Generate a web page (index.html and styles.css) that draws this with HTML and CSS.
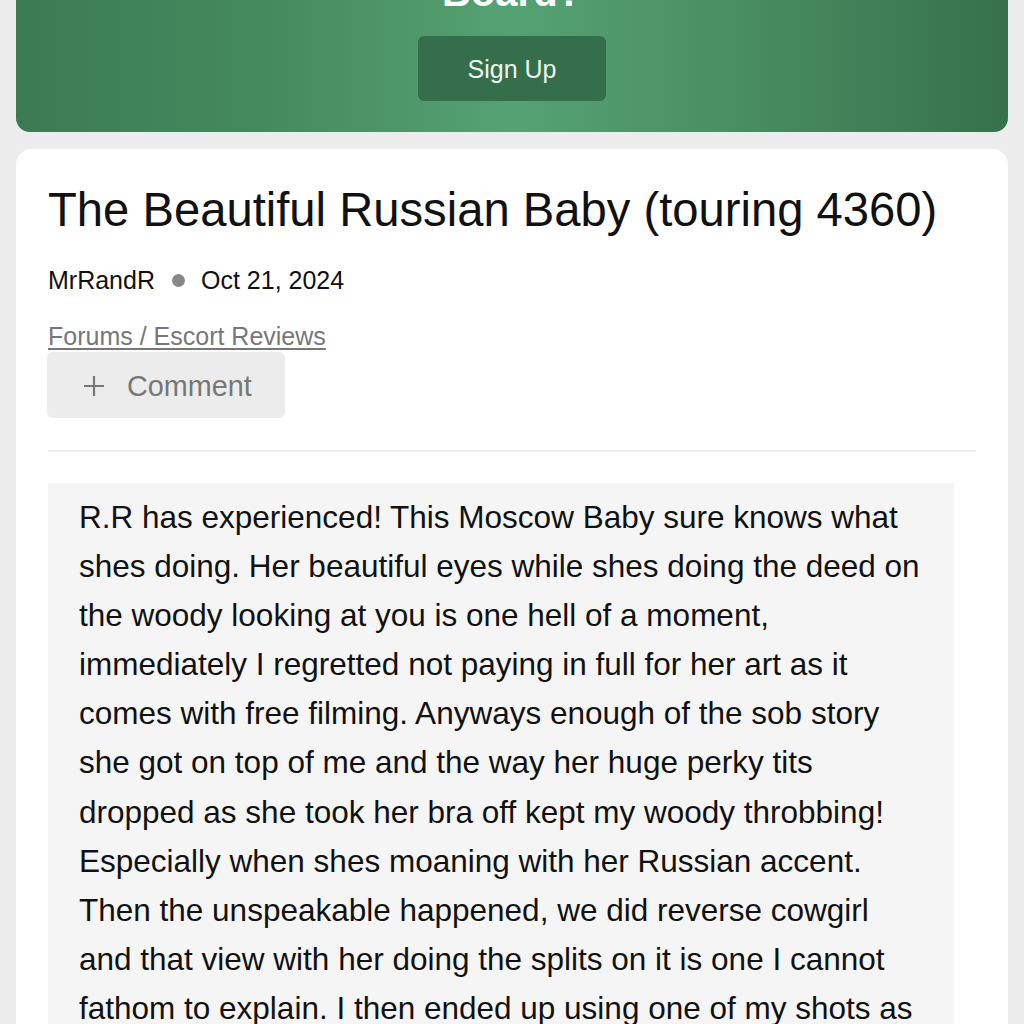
FILE: index.html
```html
<!DOCTYPE html>
<html lang="en">
<head>
<meta charset="utf-8">
<title>The Beautiful Russian Baby (touring 4360)</title>
<link rel="stylesheet" href="styles.css">
</head>
<body>
<section class="banner">
  <h2 class="banner-title">Board?</h2>
  <a class="signup" href="#">Sign Up</a>
</section>
<main class="card">
  <h1 class="title">The Beautiful Russian Baby (touring 4360)</h1>
  <div class="meta">
    <span class="author">MrRandR</span>
    <span class="dot"></span>
    <span class="date">Oct 21, 2024</span>
  </div>
  <a class="crumb" href="#">Forums / Escort Reviews</a>
  <button class="comment-btn" type="button">
    <svg class="plus" width="22" height="22" viewBox="0 0 22 22"><path d="M11 1v20M1 11h20" stroke="#777" stroke-width="2.2" fill="none"/></svg>
    <span>Comment</span>
  </button>
  <hr class="sep">
  <div class="post">
    <p class="post-text">R.R has experienced! This Moscow Baby sure knows what<br>shes doing. Her beautiful eyes while shes doing the deed on<br>the woody looking at you is one hell of a moment,<br>immediately I regretted not paying in full for her art as it<br>comes with free filming. Anyways enough of the sob story<br>she got on top of me and the way her huge perky tits<br>dropped as she took her bra off kept my woody throbbing!<br>Especially when shes moaning with her Russian accent.<br>Then the unspeakable happened, we did reverse cowgirl<br>and that view with her doing the splits on it is one I cannot<br>fathom to explain. I then ended up using one of my shots as</p>
  </div>
</main>
</body>
</html>
```
FILE: styles.css
```css
html, body {
  margin: 0;
  padding: 0;
}
body {
  background: #ececec;
  font-family: "Liberation Sans", Arial, sans-serif;
  color: #111;
  overflow: hidden;
  height: 1024px;
}
.banner {
  margin: -32px 16px 0;
  padding: 0 0 31px;
  border-radius: 0 0 14px 14px;
  background: linear-gradient(90deg, #3b7b54 0%, #45895e 25%, #55a272 50%, #4a8e63 72%, #36714c 100%);
  display: flex;
  flex-direction: column;
  align-items: center;
}
.banner-title {
  margin: 0 0 20px;
  font-size: 40px;
  line-height: 48px;
  font-weight: bold;
  color: #fff;
}
.signup {
  width: 188px;
  height: 65px;
  border-radius: 6px;
  background: #346e4b;
  color: #eef5ef;
  font-size: 25px;
  text-decoration: none;
  display: flex;
  align-items: center;
  justify-content: center;
  padding-top: 2px;
  box-sizing: border-box;
}
.card {
  margin: 17px 16px 0;
  background: #fff;
  border-radius: 16px 16px 0 0;
  padding: 33px 32px 40px;
}
.title {
  margin: 0;
  font-size: 47.2px;
  line-height: 56px;
  font-weight: normal;
  color: #111;
}
.meta {
  margin-top: 27px;
  display: flex;
  align-items: center;
  font-size: 25px;
  line-height: 30px;
}
.dot {
  width: 13px;
  height: 13px;
  border-radius: 50%;
  background: #888;
  margin: 0 16px 0 17px;
}
.crumb {
  display: inline-block;
  margin-top: 26px;
  font-size: 25px;
  line-height: 30px;
  color: #777;
  text-decoration: underline;
  text-underline-offset: 3px;
}
.comment-btn {
  display: flex;
  align-items: center;
  margin: 1px 0 0 -1px;
  width: 238px;
  height: 66px;
  border: 0;
  border-radius: 6px;
  background: #ececec;
  padding: 2px 0 0 36px;
  font-family: "Liberation Sans", Arial, sans-serif;
  font-size: 28.8px;
  color: #777;
}
.plus {
  margin-right: 22px;
}
.sep {
  margin: 32px 0 0;
  border: 0;
  height: 2px;
  background: #eeeeee;
}
.post {
  margin-top: 31px;
  width: 906px;
  background: #f5f5f5;
  padding: 10px 0 0 31px;
  box-sizing: border-box;
}
.post-text {
  margin: 0;
  font-size: 31.5px;
  line-height: 49.1px;
  color: #111;
}
```
